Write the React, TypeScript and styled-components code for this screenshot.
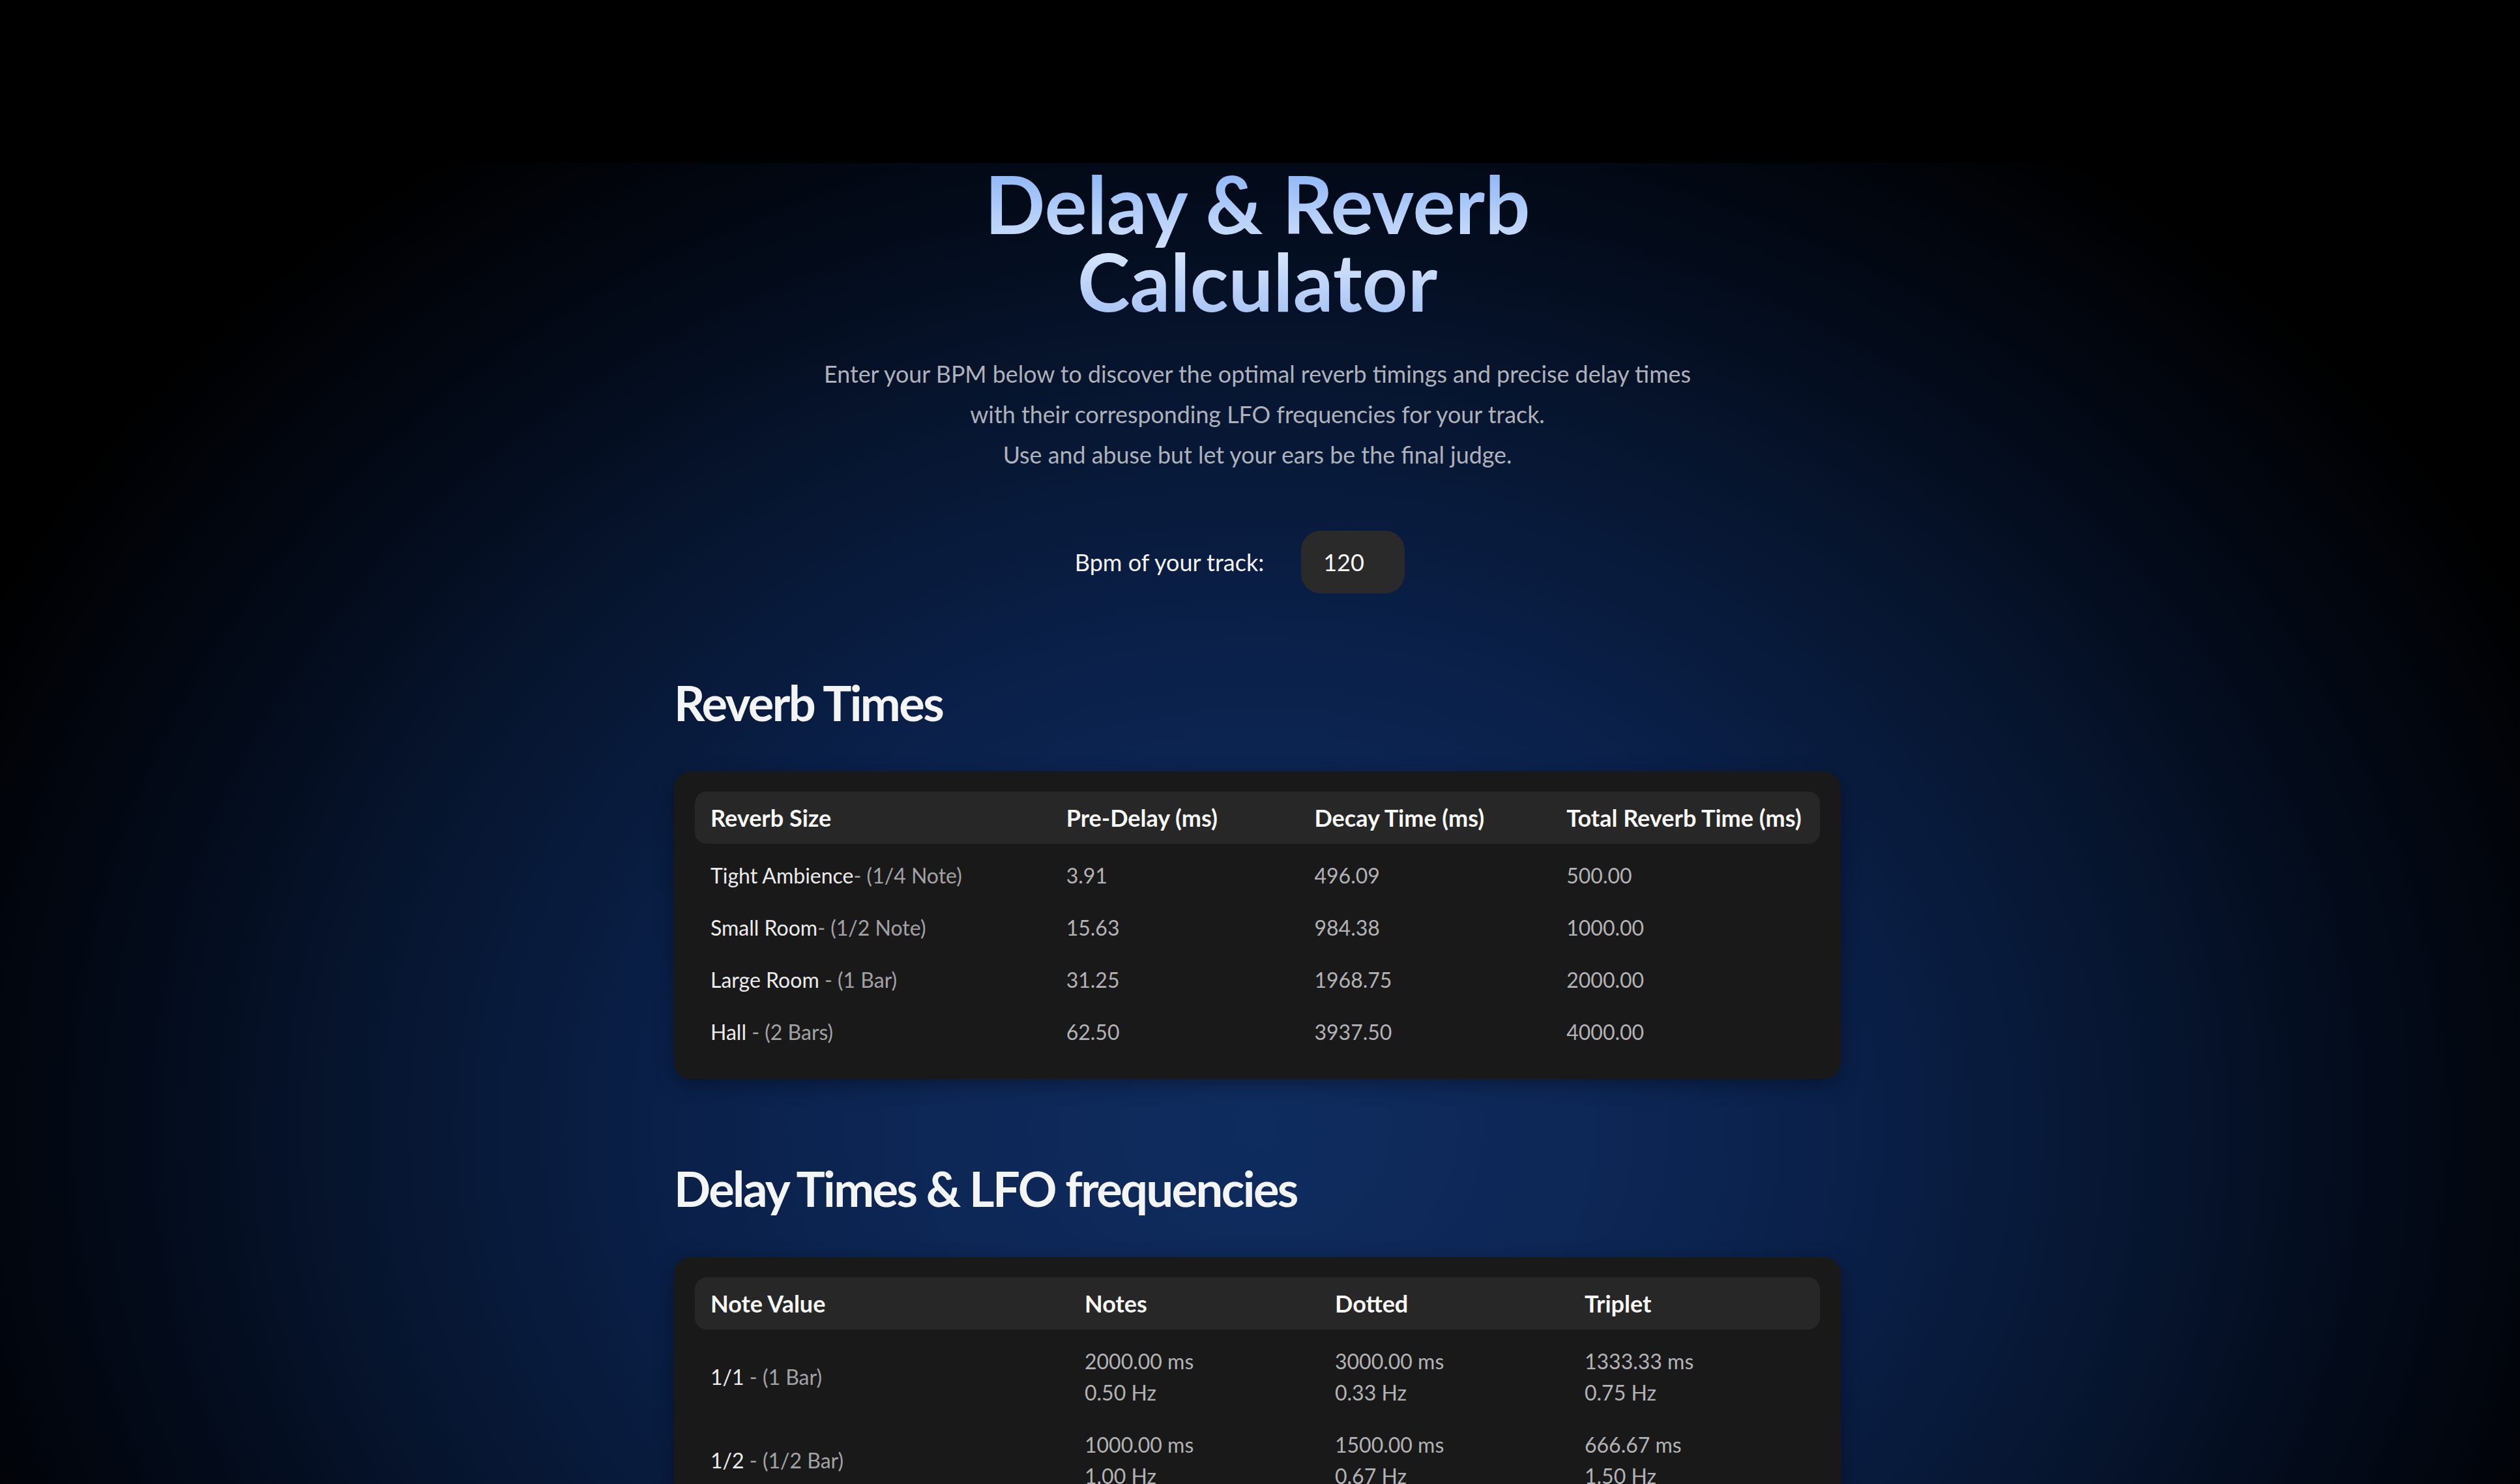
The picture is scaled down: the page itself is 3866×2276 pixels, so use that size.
import { useState } from 'react';
import styled, { createGlobalStyle } from 'styled-components';

const reverbSizes = [
  { name: 'Tight Ambience', sep: '- ', note: '(1/4 Note)', beats: 1, div: 128 },
  { name: 'Small Room', sep: '- ', note: '(1/2 Note)', beats: 2, div: 64 },
  { name: 'Large Room', sep: ' - ', note: '(1 Bar)', beats: 4, div: 64 },
  { name: 'Hall', sep: ' - ', note: '(2 Bars)', beats: 8, div: 64 },
];

const noteValues = [
  { name: '1/1', note: '(1 Bar)', beats: 4 },
  { name: '1/2', note: '(1/2 Bar)', beats: 2 },
  { name: '1/4', note: '(1 Beat)', beats: 1 },
  { name: '1/8', note: '(1/2 Beat)', beats: 0.5 },
  { name: '1/16', note: '(1/4 Beat)', beats: 0.25 },
  { name: '1/32', note: '(1/8 Beat)', beats: 0.125 },
];

const REVERB_COLS = '546fr 381fr 387fr 413fr';
const DELAY_COLS = '574fr 384fr 383fr 385fr';

function App() {
  const [bpm, setBpm] = useState('120');
  const beat = 60000 / (Number(bpm) || 120);

  return (
    <Page>
      <GlobalStyle />
      <TopBar />
      <Main>
        <Container>
          <Title>
            Delay &amp; Reverb
            <br />
            Calculator
          </Title>
          <Intro>
            Enter your BPM below to discover the optimal reverb timings and precise delay times
            <br />
            with their corresponding LFO frequencies for your track.
            <br />
            Use and abuse but let your ears be the final judge.
          </Intro>

          <BpmRow>
            <BpmLabel htmlFor="bpm">Bpm of your track:</BpmLabel>
            <BpmInput id="bpm" value={bpm} onChange={(e) => setBpm(e.target.value)} />
          </BpmRow>

          <Section>
            <SectionTitle>Reverb Times</SectionTitle>
            <Card>
              <HeadRow $cols={REVERB_COLS}>
                <HeadCell>Reverb Size</HeadCell>
                <HeadCell>Pre-Delay (ms)</HeadCell>
                <HeadCell>Decay Time (ms)</HeadCell>
                <HeadCell>Total Reverb Time (ms)</HeadCell>
              </HeadRow>
              {reverbSizes.map((r) => {
                const total = beat * r.beats;
                const pre = total / r.div;
                return (
                  <BodyRow key={r.name} $cols={REVERB_COLS}>
                    <Cell>
                      <Name>{r.name}</Name>
                      <Muted>
                        {r.sep}
                        {r.note}
                      </Muted>
                    </Cell>
                    <Cell $value>{pre.toFixed(2)}</Cell>
                    <Cell $value>{(total - pre).toFixed(2)}</Cell>
                    <Cell $value>{total.toFixed(2)}</Cell>
                  </BodyRow>
                );
              })}
            </Card>
          </Section>

          <Section>
            <SectionTitle>Delay Times &amp; LFO frequencies</SectionTitle>
            <Card>
              <HeadRow $cols={DELAY_COLS}>
                <HeadCell>Note Value</HeadCell>
                <HeadCell>Notes</HeadCell>
                <HeadCell>Dotted</HeadCell>
                <HeadCell>Triplet</HeadCell>
              </HeadRow>
              {noteValues.map((n) => {
                const ms = beat * n.beats;
                return (
                  <BodyRow key={n.name} $cols={DELAY_COLS}>
                    <Cell>
                      <Name>{n.name}</Name>
                      <Muted> - {n.note}</Muted>
                    </Cell>
                    {[ms, ms * 1.5, (ms * 2) / 3].map((v, i) => (
                      <Cell key={i} $value>
                        {v.toFixed(2)} ms
                        <br />
                        {(1000 / v).toFixed(2)} Hz
                      </Cell>
                    ))}
                  </BodyRow>
                );
              })}
            </Card>
          </Section>
        </Container>
      </Main>
    </Page>
  );
}

export default App;

const GlobalStyle = createGlobalStyle`
  html, body {
    margin: 0;
    padding: 0;
    background: #000;
  }
  body {
    font-family: Lato, 'Open Sans', Arial, sans-serif;
    color: #f3f4f6;
  }
`;

const Page = styled.div`
  min-height: 100vh;
  background: #000;
`;

const TopBar = styled.header`
  height: 250px;
  background: #000;
`;

const Main = styled.main`
  padding: 3px 8px 160px 0;
  background: radial-gradient(
    ellipse 2250px 1900px at calc(50% - 4px) 1480px,
    #0f2c5f 0%,
    #0d2756 22%,
    #0a2049 40%,
    #071733 58%,
    #030a18 78%,
    #000 96%
  );
`;

const Container = styled.div`
  width: 1790px;
  margin: 0 auto;
  display: flex;
  flex-direction: column;
`;

const Title = styled.h1`
  margin: 0;
  text-align: center;
  font-size: 122px;
  line-height: 119px;
  font-weight: 700;
  background: linear-gradient(180deg, #8ab4f8 0%, #c9dcfa 48%, #d4e3fb 58%, #a4c2f4 100%);
  -webkit-background-clip: text;
  background-clip: text;
  color: transparent;
`;

const Intro = styled.p`
  margin: 52px 0 0;
  text-align: center;
  font-size: 35.8px;
  line-height: 62px;
  color: #aeb2bb;
`;

const BpmRow = styled.div`
  margin-top: 85px;
  display: flex;
  align-items: center;
  justify-content: center;
  gap: 57px;
  padding-right: 54px;
`;

const BpmLabel = styled.label`
  font-size: 36px;
  color: #f4f4f5;
`;

const BpmInput = styled.input`
  width: 159px;
  height: 96px;
  box-sizing: border-box;
  padding: 0 0 0 34px;
  border: none;
  outline: none;
  border-radius: 30px;
  background: #2a2a2a;
  color: #fafafa;
  font-family: Lato, Arial, sans-serif;
  font-size: 36px;
`;

const Section = styled.section`
  margin-top: 123px;
`;

const SectionTitle = styled.h2`
  margin: 0 0 61px;
  font-size: 74px;
  line-height: 89px;
  font-weight: 700;
  color: #f3f4f6;
  letter-spacing: -2.6px;
`;

const Card = styled.div`
  background: #19191a;
  border-radius: 26px;
  padding: 31px 32px 32px;
  box-shadow: 0 8px 30px rgba(0, 0, 0, 0.35);
`;

const HeadRow = styled.div<{ $cols: string }>`
  display: grid;
  grid-template-columns: ${(p) => p.$cols};
  background: #272727;
  border-radius: 18px;
  margin-bottom: 9px;
`;

const BodyRow = styled.div<{ $cols: string }>`
  display: grid;
  grid-template-columns: ${(p) => p.$cols};
  align-items: center;
`;

const HeadCell = styled.div`
  padding: 16px 24px;
  font-size: 36px;
  line-height: 48px;
  font-weight: 700;
  color: #fafafa;
  white-space: nowrap;
`;

const Cell = styled.div<{ $value?: boolean }>`
  padding: 16px 24px;
  font-size: 32px;
  line-height: 48px;
  color: ${(p) => (p.$value ? '#b3b3b5' : '#a3a3a6')};
  white-space: nowrap;
`;

const Name = styled.span`
  color: #ececec;
`;

const Muted = styled.span`
  color: #a3a3a6;
`;
